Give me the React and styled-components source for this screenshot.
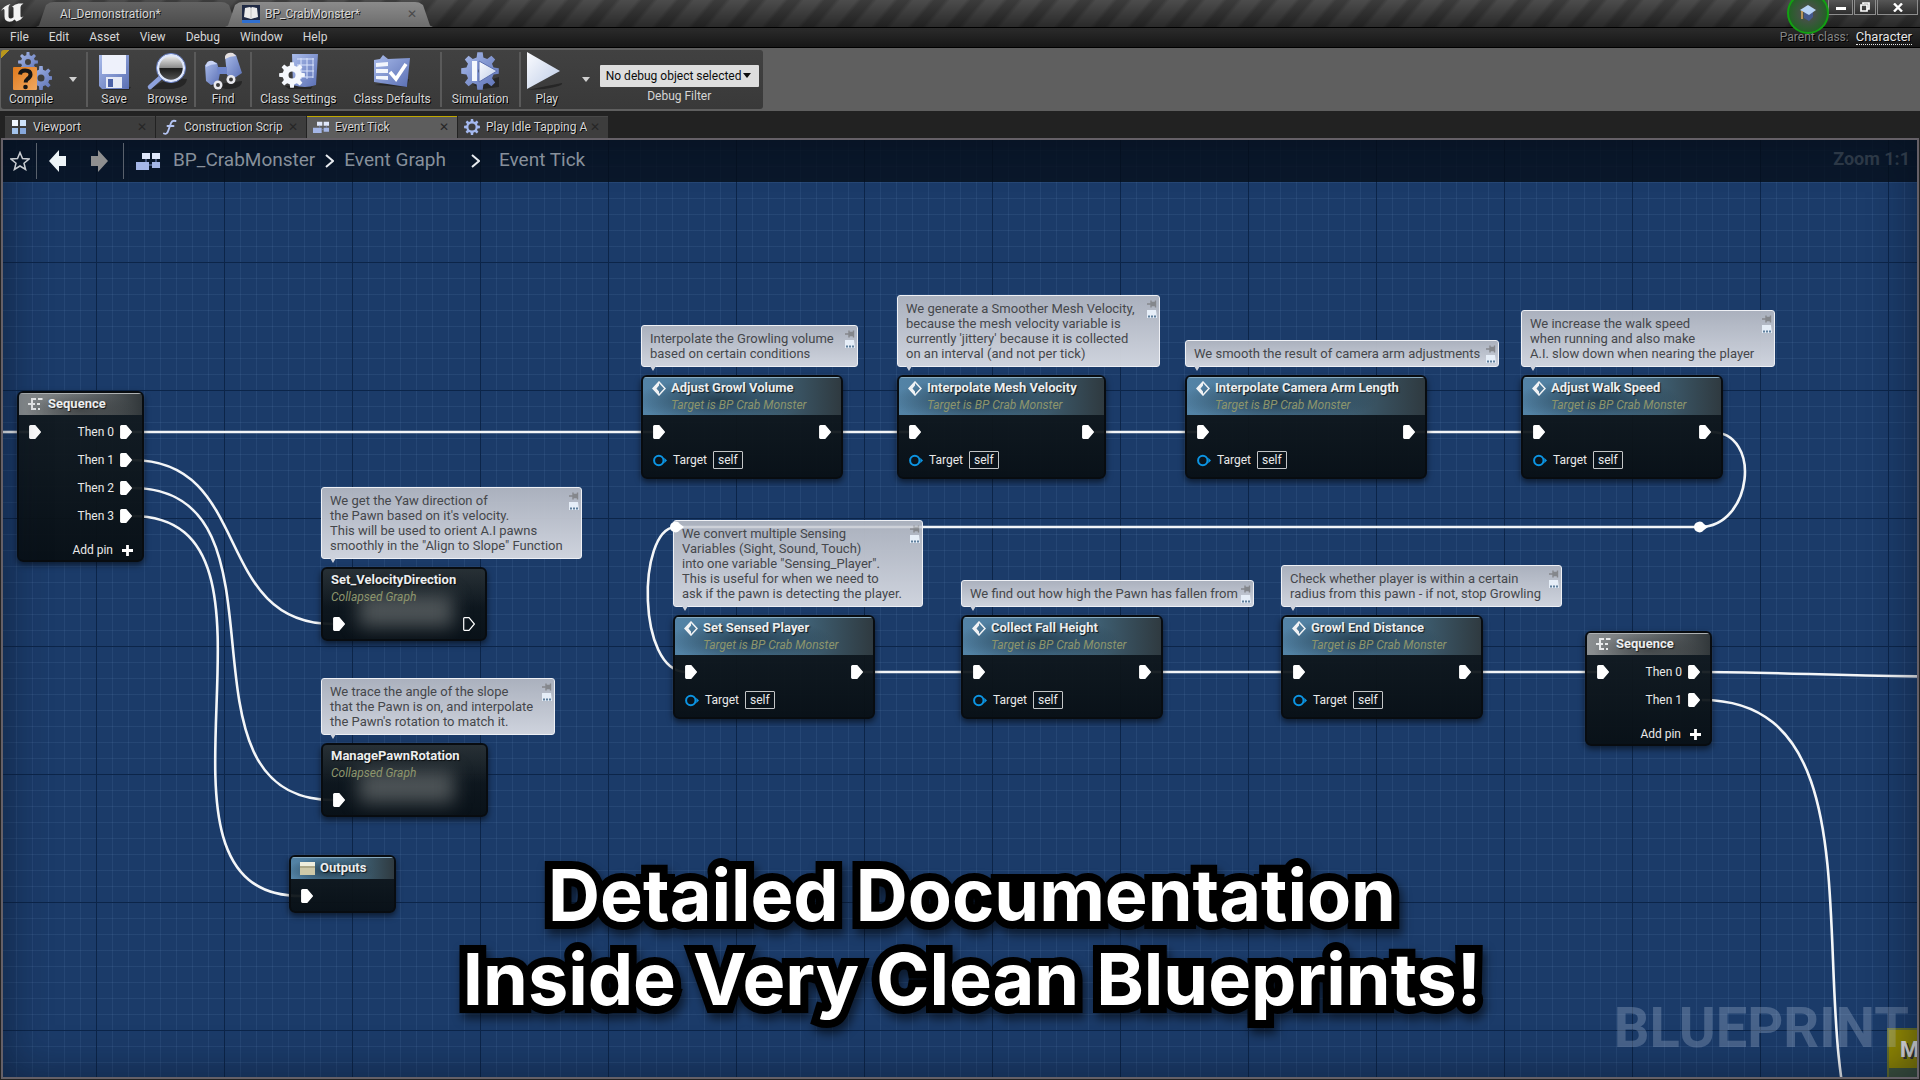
import React from "react";
import styled, { createGlobalStyle, css } from "styled-components";

const GlobalStyle = createGlobalStyle`
  *, *::before, *::after { box-sizing: border-box; }
  html, body { margin: 0; background: #222; }
  body, button, select {
    font-family: Roboto, "Liberation Sans", sans-serif;
    font-size: 12px;
    color: #d6d6d6;
  }
  button { margin: 0; padding: 0; border: 0; background: none; cursor: pointer; }
`;

/* ---------- window frame ---------- */

const Window = styled.div`
  display: flex;
  flex-direction: column;
  height: 100vh;
  overflow: hidden;
  background: #222;
`;

const TitleBar = styled.header`
  display: flex;
  align-items: flex-end;
  height: 27px;
  flex: none;
  background:
    linear-gradient(180deg, rgba(0, 0, 0, 0) 0%, rgba(0, 0, 0, 0.45) 100%),
    repeating-linear-gradient(130deg, #4c4c4c 0 12px, #3c3c3c 16px 24px, #4c4c4c 28px);
`;

const Logo = styled.div`
  width: 44px;
  height: 27px;
  padding: 3px 0 0 1px;
`;

const DocTab = styled.button`
  display: flex;
  align-items: center;
  gap: 5px;
  width: ${(p) => p.$width}px;
  height: 25px;
  margin-right: -14px;
  padding: 0 16px 2px ${(p) => p.$indent}px;
  text-shadow: 1px 1px 0 #111;
  background: ${(p) =>
    p.$active
      ? "linear-gradient(180deg, #8b8b8b, #6c6c6c)"
      : "linear-gradient(180deg, #636363, #4b4b4b)"};
  clip-path: polygon(0 100%, 3px 94%, 10px 12%, 14px 2%, 18px 0, calc(100% - 18px) 0, calc(100% - 14px) 2%, calc(100% - 10px) 12%, calc(100% - 3px) 94%, 100% 100%);
`;

const DocTabs = styled.nav`
  display: flex;
  flex: 1;
  margin-left: -8px;
`;

const Cross = styled.span`
  margin-left: auto;
  line-height: 8px;
  color: ${(p) => (p.$dim ? "#262626" : "#4a4a4a")};
  text-shadow: none;
`;

const SystemButtons = styled.div`
  position: relative;
  display: flex;
  align-self: flex-start;
  gap: 1px;
  margin-right: 2px;
`;

const SystemButton = styled.button`
  display: grid;
  place-items: center;
  width: ${(p) => p.$width}px;
  height: 15px;
  background: linear-gradient(180deg, #565656, #2e2e2e);
  border: 1px solid #8d8d8d;
  border-top: 0;
`;

const Tutorial = styled.button`
  position: absolute;
  right: 89px;
  top: -8px;
  width: 42px;
  height: 42px;
  display: grid;
  place-items: center;
  border-radius: 50%;
  border: 2px solid #12a012;
  background: radial-gradient(circle, #4a4f4b 20%, #0f6a12 100%);
  z-index: 2;
`;

const MenuBar = styled.nav`
  display: flex;
  align-items: center;
  gap: 20px;
  flex: none;
  height: 21px;
  padding: 0 8px 2px 10px;
  border-top: 1px solid #000;
  border-bottom: 1px solid #000;
  background: linear-gradient(180deg, #2b2b2b, #161616);
  text-shadow: 1px 1px 0 #000;
`;

const MenuItem = styled.button`
  line-height: 18px;
`;

const ParentClass = styled.div`
  display: flex;
  align-items: baseline;
  gap: 7px;
  margin-left: auto;
  color: #858585;
`;

const ClassLink = styled.a`
  font-size: 13px;
  line-height: 15px;
  color: #e6e6e6;
  text-decoration: none;
  border-bottom: 1px dotted #e6e6e6;
`;

/* ---------- toolbar ---------- */

const ToolStrip = styled.div`
  flex: none;
  display: flex;
  height: 63px;
  padding: 2px 2px 2px 1px;
  background: #5f5f5f;
`;

const Tools = styled.div`
  display: flex;
  align-items: stretch;
  padding: 0 4px 0 2px;
  background:
    linear-gradient(135deg, #b8961c 0 6px, transparent 6px),
    linear-gradient(180deg, #414141, #393939);
  border-radius: 3px;
`;

const ToolButton = styled.button`
  display: flex;
  flex-direction: column;
  align-items: center;
  justify-content: flex-start;
  padding: 1px ${(p) => p.$pad}px 0;
  line-height: 16px;
  white-space: nowrap;
  text-shadow: 1px 1px 0 #000;
  svg { display: block; }
`;

const Divider = styled.span`
  width: 2px;
  margin: 2px 0;
  background: #5a5a5a;
`;

const Caret = styled.button`
  display: grid;
  place-items: center;
  width: 27px;
`;

const Filter = styled.label`
  display: flex;
  flex-direction: column;
  align-items: center;
  justify-content: center;
  gap: 1px;
  padding-top: 9px;
  line-height: 16px;
`;

const SelectBox = styled.span`
  display: grid;
  align-items: center;
  width: 159px;
  height: 22px;
  background: #dedede;
  border-radius: 1px;
  svg { grid-area: 1 / 1; justify-self: end; margin-right: 8px; }
`;

const Select = styled.select`
  grid-area: 1 / 1;
  appearance: none;
  width: 100%;
  height: 22px;
  padding: 0 0 0 6px;
  border: 0;
  background: none;
  color: #0c0c0c;
`;

const Tabs = styled.nav`
  flex: none;
  display: flex;
  gap: 1px;
  height: 27px;
  padding: 5px 5px 0;
`;

const Tab = styled.button`
  display: flex;
  align-items: center;
  width: 150px;
  padding: 0 8px 2px 6px;
  text-shadow: 1px 1px 0 #000;
  white-space: nowrap;
  border-top: 1px solid ${(p) => (p.$active ? "#c0a800" : "#484848")};
  background: ${(p) => (p.$active ? "#5d5d5d" : "#3d3d3d")};
  svg { flex: none; margin-right: 6px; }
`;

const TabLabel = styled.span`
  overflow: hidden;
  max-width: 104px;
`;

/* ---------- graph ---------- */

const Canvas = styled.main`
  position: relative;
  flex: 1;
  overflow: hidden;
  margin: 0 1px 1px;
  border: 2px solid #656067;
  background-color: #1b3b69;
  background-image:
    linear-gradient(#0c2549 1px, transparent 1px),
    linear-gradient(90deg, #0c2549 1px, transparent 1px),
    linear-gradient(rgba(130, 170, 220, 0.1) 1px, transparent 1px),
    linear-gradient(90deg, rgba(130, 170, 220, 0.1) 1px, transparent 1px);
  background-size: 128px 128px, 128px 128px, 16px 16px, 16px 16px;
  background-position: 93px 122px, 93px 122px, 13px 10px, 13px 10px;
  &::after {
    content: "";
    position: absolute;
    inset: 0;
    pointer-events: none;
    box-shadow: inset 0 0 44px rgba(8, 16, 32, 0.55);
  }
`;

const Crumbs = styled.div`
  position: relative;
  z-index: 2;
  display: flex;
  align-items: center;
  height: 42px;
  padding: 0 7px;
  background: rgba(4, 12, 22, 0.76);
  svg { flex: none; }
`;

const CrumbRule = styled.span`
  width: 1px;
  height: 36px;
  margin: 0 12px 0 6px;
  background: #59616c;
`;

const NavButton = styled.button`
  display: grid;
  margin-right: ${(p) => p.$after}px;
`;

const Crumb = styled.button`
  margin: 0 ${(p) => p.$after}px 0 ${(p) => p.$before}px;
  padding-bottom: 2px;
  font-size: 19px;
  line-height: 24px;
  color: #87909b;
`;

const Zoom = styled.span`
  margin-left: auto;
  padding-bottom: 6px;
  font-size: 18px;
  font-weight: 700;
  color: #2c3846;
`;

/* Graph space is panned so that its origin sits at the window's corner. */
const World = styled.div`
  position: absolute;
  left: -3px;
  top: -140px;
  width: 1920px;
  height: 1080px;
`;

const Wires = styled.svg`
  position: absolute;
  left: 0;
  top: 0;
  fill: none;
  stroke: #f4f6f8;
  stroke-width: 2.6;
`;

const NodeSlot = styled.div`
  position: absolute;
  left: ${(p) => p.$x}px;
  top: ${(p) => p.$y}px;
  width: ${(p) => p.$w}px;
`;

const Note = styled.div`
  position: absolute;
  left: 0;
  bottom: calc(100% + 8px);
  width: ${(p) => p.$w}px;
  padding: 5px 8px;
  border: 1px solid #eef0f5;
  border-radius: 3px;
  background: linear-gradient(180deg, rgba(178, 183, 194, 0.95), rgba(212, 216, 225, 0.97));
  font-size: 13px;
  line-height: 15px;
  white-space: pre;
  color: #45474b;
  &::after {
    content: "";
    position: absolute;
    left: 8px;
    top: 100%;
    border: 3px solid transparent;
    border-top: 5px solid #cfd3dc;
  }
`;

const NoteTools = styled.div`
  position: absolute;
  right: 2px;
  top: 3px;
  svg { display: block; }
`;

const NodeBox = styled.section`
  overflow: hidden;
  border: 2px solid #080c10;
  border-radius: 6px;
  background: linear-gradient(180deg, rgba(19, 27, 32, 0.93), rgba(8, 15, 20, 0.95));
  box-shadow: 0 3px 6px rgba(0, 0, 0, 0.55);
`;

const headers = {
  call: css`
    background:
      radial-gradient(ellipse 42% 60% at 38% 62%, rgba(32, 56, 72, 0.9), rgba(32, 56, 72, 0) 100%),
      linear-gradient(90deg, #5383a6 0%, #4c7896 45%, #3c5a6c 72%, #2f3a40 100%);
    box-shadow: inset 0 1px 0 #86a9c0;
  `,
  flow: css`
    background:
      radial-gradient(ellipse 45% 80% at 50% 80%, rgba(50, 54, 56, 0.7), rgba(50, 54, 56, 0) 100%),
      linear-gradient(90deg, #8b8f91 0%, #6d7274 50%, #32383b 100%);
    box-shadow: inset 0 1px 0 #aeb2b4;
  `,
  plain: css`
    padding-left: 8px;
    background: linear-gradient(180deg, rgba(48, 56, 60, 0.7), rgba(48, 56, 60, 0));
  `,
};

const NodeHeader = styled.header`
  display: flex;
  align-items: flex-start;
  gap: 5px;
  height: ${(p) => (p.$tall ? 38 : 22)}px;
  padding: 2px 9px 0;
  ${(p) => headers[p.$kind]}
  svg { flex: none; margin-top: 2px; }
`;

const NodeTitle = styled.h2`
  position: relative;
  z-index: 1;
  margin: 0;
  font-size: 13px;
  line-height: 17px;
  font-weight: 700;
  white-space: nowrap;
  color: #eceeef;
  text-shadow: 1px 1px 1px rgba(0, 0, 0, 0.7);
`;

const NodeSub = styled.p`
  position: relative;
  z-index: 1;
  margin: 0;
  line-height: 19px;
  font-style: italic;
  white-space: nowrap;
  color: #8d956c;
`;

const NodeBody = styled.div`
  position: relative;
  padding: 3px 10px ${(p) => p.$foot}px;
  ${(p) =>
    p.$collapsed &&
    css`
      &::before {
        content: "";
        position: absolute;
        left: 36px;
        right: 32px;
        top: -12px;
        bottom: 12px;
        background: rgba(120, 125, 125, 0.6);
        filter: blur(9px);
      }
    `}
`;

const PinRow = styled.div`
  position: relative;
  display: flex;
  align-items: center;
  gap: 6px;
  height: 28px;
  color: #e9e9e9;
  svg { flex: none; display: block; }
`;

const Push = styled.span`
  margin-left: auto;
`;

const Self = styled.span`
  height: 18px;
  padding: 0 4px;
  line-height: 16px;
  border: 1px solid #c4c6c7;
  border-radius: 1px;
`;

const AddPin = styled.button`
  display: flex;
  align-items: center;
  justify-content: flex-end;
  gap: 9px;
  width: 100%;
  height: 20px;
  margin-top: 10px;
  padding-right: 9px;
  color: #e9e9e9;
`;

const Watermark = styled.div`
  position: absolute;
  right: 8px;
  bottom: 11px;
  font-size: 56px;
  line-height: 75px;
  font-weight: 700;
  color: rgba(190, 205, 225, 0.28);
`;

const Macro = styled.div`
  position: absolute;
  left: 1887px;
  top: 1028px;
  width: 120px;
  height: 120px;
  border: 2px solid #66702c;
  background: #40563f;
`;

const MacroTitle = styled.div`
  height: 38px;
  padding: 0 11px;
  background: #928800;
  font-size: 22px;
  line-height: 40px;
  font-weight: 700;
  color: #e6e6e6;
  text-shadow: 2px 2px 0 #333;
`;

const Banner = styled.p`
  position: absolute;
  left: 0;
  right: 0;
  bottom: 56px;
  margin: 0;
  padding-left: 24px;
  text-align: center;
  font-family: Inter, "Open Sans", sans-serif;
  font-size: 72px;
  line-height: 84px;
  font-weight: 700;
  color: #fff;
  -webkit-text-stroke: 16px #000;
  paint-order: stroke fill;
  stroke-linejoin: round;
  filter: drop-shadow(3px 6px 5px rgba(0, 0, 0, 0.55));
  z-index: 3;
`;

/* ---------- drawings ---------- */

const gear = (cx, cy, outer, inner, hole, teeth) => {
  const pts = [];
  for (let i = 0; i < teeth; i++) {
    const a = (i / teeth) * Math.PI * 2 - Math.PI / 2;
    const s = Math.PI / teeth;
    [[-0.62, inner], [-0.36, outer], [0.36, outer], [0.62, inner]].forEach(([k, r]) =>
      pts.push(`${(cx + Math.cos(a + k * s) * r).toFixed(2)} ${(cy + Math.sin(a + k * s) * r).toFixed(2)}`)
    );
  }
  return `M${pts.join("L")}Z M${cx - hole} ${cy}a${hole} ${hole} 0 1 0 ${hole * 2} 0a${hole} ${hole} 0 1 0 ${-hole * 2} 0Z`;
};

const HiddenSvg = styled.svg`
  position: absolute;
`;

const Defs = () => (
  <HiddenSvg width="0" height="0" aria-hidden="true">
    <defs>
      <linearGradient id="blue" x1="0" y1="0" x2="1" y2="1">
        <stop offset="0" stopColor="#a9bbea" />
        <stop offset="1" stopColor="#5a6fb4" />
      </linearGradient>
      <linearGradient id="pale" x1="0" y1="0" x2="1" y2="1">
        <stop offset="0" stopColor="#fbfcff" />
        <stop offset="1" stopColor="#bccbe6" />
      </linearGradient>
      <linearGradient id="orange" x1="0" y1="0" x2="1" y2="1">
        <stop offset="0" stopColor="#e07a1c" />
        <stop offset="1" stopColor="#f0a860" />
      </linearGradient>
      <linearGradient id="glass" x1="0" y1="0" x2="0" y2="1">
        <stop offset="0" stopColor="#f4f4f4" />
        <stop offset="0.48" stopColor="#8e8e8e" />
        <stop offset="0.52" stopColor="#1c1c1c" />
        <stop offset="1" stopColor="#585858" />
      </linearGradient>
    </defs>
  </HiddenSvg>
);

const Shade = ({ d }) => <path d={d} fill="#1a1a1a" opacity="0.65" />;

const CompileIcon = () => (
  <svg width="42" height="40" viewBox="0 0 42 40">
    <path d={gear(31, 27, 12, 8.5, 3.5, 8)} fill="url(#blue)" fillRule="evenodd" />
    <path d={gear(18, 11, 10, 7, 3, 8)} fill="url(#blue)" fillRule="evenodd" />
    <rect x="3" y="16" width="24" height="23" rx="1" fill="url(#orange)" />
    <path d="M10 23.500Q10.500 19.500 15.200 19.500Q20.500 19.500 20.500 23.500Q20.500 26 17.500 28Q15.700 29.300 15.700 31.500" fill="none" stroke="#161616" strokeWidth="4" />
    <circle cx="15.500" cy="36" r="2.300" fill="#161616" />
  </svg>
);

const SaveIcon = () => (
  <svg width="42" height="40" viewBox="0 0 42 40">
    <Shade d="M8 34L38 36L36 39H12Z" />
    <path d="M6 4H36V38H9L6 35Z" fill="url(#blue)" />
    <path d="M9 4H33V23H9Z" fill="#eef1fb" />
    <path d="M13 26H29V37H13Z" fill="#e6eaf6" />
    <path d="M15 28H20V36H15Z" fill="#4c62a8" />
  </svg>
);

const BrowseIcon = () => (
  <svg width="42" height="40" viewBox="0 0 42 40">
    <Shade d="M14 32Q28 26 41 28Q40 37 24 38H4Z" />
    <path d="M14 27L4 36" stroke="#8ea2dd" strokeWidth="4.500" strokeLinecap="round" />
    <circle cx="25" cy="17" r="13" fill="url(#glass)" stroke="#dfe7fb" strokeWidth="2.500" />
    <circle cx="25" cy="17" r="14.600" fill="none" stroke="#6d84c8" strokeWidth="1" />
  </svg>
);

const FindIcon = () => (
  <svg width="42" height="40" viewBox="0 0 42 40">
    <Shade d="M8 34L40 30Q40 38 24 38Z" />
    <path d="M3 14Q9 9 15 12L18 22L16 32L9 34L4 30Z" fill="url(#blue)" />
    <path d="M23 5Q29 1 34 4L40 22L31 28L25 24Z" fill="url(#blue)" />
    <path d="M15 16H25V23H16Z" fill="#6f86cb" />
    <path d="M4 14Q5 9 11 10L15 13Q9 13 4 16Z" fill="#c9d4f5" />
    <path d="M23 6Q24 1 31 2L34 5Q28 5 23 8Z" fill="#e6e0e0" />
    <circle cx="16" cy="34" r="4.500" fill="#e9e9ee" />
    <circle cx="16" cy="34" r="2" fill="#3a3a3a" />
    <circle cx="29" cy="28.500" r="4.500" fill="#e9e9ee" />
    <circle cx="29" cy="28.500" r="2" fill="#3a3a3a" />
  </svg>
);

const SettingsIcon = () => (
  <svg width="42" height="40" viewBox="0 0 42 40">
    <Shade d="M8 35L36 34L34 38H12Z" />
    <path d="M15 3H41L39 34Q28 38 16 34Z" fill="url(#blue)" />
    <path d="M20 8H37M20 14H37M20 20H37M20 26H36M24 7V28M30 7V28M36 7V27" stroke="#d8e2fb" strokeWidth="1" />
    <path d={gear(15, 24, 13, 9.5, 3.5, 8)} fill="#f5f8fd" fillRule="evenodd" />
  </svg>
);

const DefaultsIcon = () => (
  <svg width="42" height="40" viewBox="0 0 42 40">
    <Shade d="M4 34L36 36L38 28Z" />
    <path d="M3 9L9 8L12 4L17 8L39 7L36 36L3 31Z" fill="url(#blue)" />
    <path d="M5 12L17 11V15L5 16ZM5 18L17 18V22L5 22ZM5 25L17 25V29L5 28Z" fill="#f2f5fc" />
    <path d="M19 21L25 28L35 13" fill="none" stroke="#fff" strokeWidth="3.500" />
  </svg>
);

const SimulateIcon = () => (
  <svg width="42" height="40" viewBox="0 0 42 40">
    <Shade d="M14 34L40 26L40 36L24 38Z" />
    <path d={gear(21, 20, 19, 14, 2, 8)} fill="url(#blue)" fillRule="evenodd" />
    <path d="M13 10H18V30H13Z" fill="#f4f7fd" />
    <path d="M20 10L38 20L20 31Z" fill="url(#pale)" stroke="#5b6fae" strokeWidth="1" />
  </svg>
);

const PlayIcon = () => (
  <svg width="42" height="40" viewBox="0 0 42 40">
    <Shade d="M1 39L36 32Q38 35 18 38Z" />
    <path d="M1 1L34 20L1 38Z" fill="url(#pale)" />
  </svg>
);

const CaretIcon = ({ color = "#d0d0d0" }) => (
  <svg width="8" height="5" viewBox="0 0 8 5"><path d="M0 0H8L4 5Z" fill={color} /></svg>
);

const UnrealLogo = () => (
  <svg width="24" height="20" viewBox="0 0 24 20" aria-label="Unreal">
    <path d="M0 8Q3 2.500 9.500 1Q7.500 2.500 7.500 4.500V13.500Q7.500 15.500 9.500 15.500Q11 15.500 12.500 14.200V5Q12.500 3.500 10.800 4Q13.500 1 17.500 0.500H22.500Q19.500 2 19.500 4V13Q19.500 14.500 21 14.200L22.500 13Q20.500 17 15.500 18.500L13.500 16.500Q11.500 18.800 8.500 18.800Q3.500 18.500 3.500 13.500V7.500Q3.500 5.800 2.500 6Q1.200 6.400 0 8Z" fill="#f2f2f2" />
  </svg>
);

const BookIcon = () => (
  <svg width="18" height="18" viewBox="0 0 18 18">
    <rect width="18" height="16" fill="#1f2a44" />
    <path d="M2 12L3 3L8 2L9 3L10 2L15 3L16 12L9 14Z" fill="#ececec" />
    <path d="M9 3V13" stroke="#b5b5b5" strokeWidth="0.800" />
    <rect y="15" width="18" height="3" fill="#2f6fd0" />
  </svg>
);

const GridIcon = () => (
  <svg width="16" height="14" viewBox="-1 0 16 14">
    <path d="M0 0H6V6H0Z" fill="#f2f8ff" /><path d="M8 0H14V6H8Z" fill="#cfe3fa" />
    <path d="M0 8H6V14H0Z" fill="#a3c3ec" /><path d="M8 8H14V14H8Z" fill="#86a8dc" />
  </svg>
);

const GraphIcon = ({ size = 16 }) => (
  <svg width={size} height={(size * 3) / 4} viewBox="0 0 24 18">
    <path d="M6 1H14V7H6ZM16 1H24V7H16Z" fill="#dfe7fa" />
    <path d="M0 10H13V18H0ZM16 10H24V16H16Z" fill="#a4b6e6" />
    <path d="M10 7V10M20 7V10M13 13H16" stroke="#7f92cc" strokeWidth="1" />
  </svg>
);

const FunctionIcon = () => (
  <svg width="16" height="16" viewBox="0 0 16 16">
    <path d="M2 14.500Q5 16 6.500 11L9 4Q10.200 0.800 13.500 2M5.500 7H11.500" fill="none" stroke="#b4c4f2" strokeWidth="1.900" strokeLinecap="round" />
  </svg>
);

const GearIcon = () => (
  <svg width="16" height="16" viewBox="0 0 16 16">
    <path d={gear(8, 8, 8, 5.8, 3.6, 8)} fill="#a4b8ee" fillRule="evenodd" />
  </svg>
);

const EventIcon = () => (
  <svg width="14" height="15" viewBox="0 0 14 15">
    <path d="M7 1L13 7.500L7 14L1 7.500Z" fill="none" stroke="#f0f2f4" strokeWidth="1.500" />
    <path d="M7 1L1 7.500L7 14L7 10.500L4.500 7.500L7 4.500Z" fill="#f0f2f4" />
  </svg>
);

const SequenceIcon = () => (
  <svg width="15" height="14" viewBox="0 0 15 14">
    <path d="M0 7H7M4 1V13M4 2H8M4 12H8M10 2H14.500M9 7H12M10 12H12" fill="none" stroke="#e8eaeb" strokeWidth="2" />
  </svg>
);

const BoxIcon = () => (
  <svg width="15" height="15" viewBox="0 0 15 15">
    <path d="M0 1H15V14H0Z" fill="#cfc9a8" /><path d="M0 1H15V5H0Z" fill="#efeedd" />
    <path d="M0 6H15" stroke="#8b8768" />
  </svg>
);

const ExecPin = ({ open }) => (
  <svg width="12" height="14" viewBox="0 0 12 14">
    <path d="M1.500 .7H6L11.400 7L6 13.300H1.500Q.7 13.300 .7 12.500V1.500Q.7 .7 1.500 .7Z" fill={open ? "none" : "#fff"} stroke="#fff" strokeWidth="1.200" />
  </svg>
);

const ObjectPin = () => (
  <svg width="14" height="13" viewBox="0 0 14 13">
    <circle cx="5.800" cy="6.500" r="4.700" fill="none" stroke="#0c94e2" strokeWidth="2" />
    <path d="M11.300 3.800L14 6.500L11.300 9.200Z" fill="#0c94e2" />
  </svg>
);

const PlusIcon = () => (
  <svg width="11" height="11" viewBox="0 0 11 11"><path d="M5.500 0V11M0 5.500H11" stroke="#fff" strokeWidth="2.800" /></svg>
);

const NoteIcons = () => (
  <svg width="10" height="20" viewBox="0 0 10 20">
    <path d="M0 5H4M4 1.500V8.500M4 3.500H8V6.500H4M8.500 1.500V8.500" stroke="#85878c" strokeWidth="1.400" fill="#85878c" />
    <path d="M0 11H9L10 19H0Z" fill="#e6eef8" />
    <path d="M1 17.500H9" stroke="#5f7f9c" strokeWidth="2" strokeDasharray="2 1" />
  </svg>
);

const Chevron = () => (
  <svg width="9" height="14" viewBox="0 0 9 14"><path d="M1 1L8 7L1 13" fill="none" stroke="#e8ecf0" strokeWidth="2" /></svg>
);

/* ---------- data ---------- */

const menus = ["File", "Edit", "Asset", "View", "Debug", "Window", "Help"];

const calls = [
  { x: 641, y: 375, w: 202, title: "Adjust Growl Volume", noteW: 217,
    note: "Interpolate the Growling volume\nbased on certain conditions" },
  { x: 897, y: 375, w: 209, title: "Interpolate Mesh Velocity", noteW: 263,
    note: "We generate a Smoother Mesh Velocity,\nbecause the mesh velocity variable is\ncurrently 'jittery' because it is collected\non an interval (and not per tick)" },
  { x: 1185, y: 375, w: 242, title: "Interpolate Camera Arm Length", noteW: 314,
    note: "We smooth the result of camera arm adjustments" },
  { x: 1521, y: 375, w: 202, title: "Adjust Walk Speed", noteW: 254,
    note: "We increase the walk speed\nwhen running and also make\nA.I. slow down when nearing the player" },
  { x: 673, y: 615, w: 202, title: "Set Sensed Player", noteW: 250,
    note: "We convert multiple Sensing\nVariables (Sight, Sound, Touch)\ninto one variable \"Sensing_Player\".\nThis is useful for when we need to\nask if the pawn is detecting the player." },
  { x: 961, y: 615, w: 202, title: "Collect Fall Height", noteW: 293,
    note: "We find out how high the Pawn has fallen from" },
  { x: 1281, y: 615, w: 202, title: "Growl End Distance", noteW: 281,
    note: "Check whether player is within a certain\nradius from this pawn - if not, stop Growling" },
];

const collapsed = [
  { x: 321, y: 567, w: 166, title: "Set_VelocityDirection", out: true, noteW: 261,
    note: "We get the Yaw direction of\nthe Pawn based on it's velocity.\nThis will be used to orient A.I pawns\nsmoothly in the \"Align to Slope\" Function" },
  { x: 321, y: 743, w: 167, title: "ManagePawnRotation", out: false, noteW: 234,
    note: "We trace the angle of the slope\nthat the Pawn is on, and interpolate\nthe Pawn's rotation to match it." },
];

const sequences = [
  { x: 17, y: 391, outs: 4 },
  { x: 1585, y: 631, outs: 2 },
];

const wires = [
  "M0 432H30", "M132 432H654",
  "M132 460C254 460 211 624 333 624",
  "M132 488C303 488 162 800 333 800",
  "M132 516C315 516 118 896 301 896",
  "M830 432H910", "M1093 432H1198", "M1414 432H1534",
  "M1711 432C1763 432 1752 527 1700 527", "M1700 527H675",
  "M675 527C637 530 637 672 686 672",
  "M862 672H974", "M1150 672H1294", "M1470 672H1598",
  "M1702 672C1780 672 1860 677 1990 677",
  "M1702 700C1944 700 1722 1220 1964 1220",
];

/* ---------- graph parts ---------- */

const Comment = ({ width, text }) => (
  <Note $w={width}>
    {text}
    <NoteTools><NoteIcons /></NoteTools>
  </Note>
);

const CallNode = ({ x, y, w, title, note, noteW }) => (
  <NodeSlot $x={x} $y={y} $w={w}>
    <Comment width={noteW} text={note} />
    <NodeBox>
      <NodeHeader $kind="call" $tall>
        <EventIcon />
        <div>
          <NodeTitle>{title}</NodeTitle>
          <NodeSub>Target is BP Crab Monster</NodeSub>
        </div>
      </NodeHeader>
      <NodeBody $foot={3}>
        <PinRow><ExecPin /><Push /><ExecPin /></PinRow>
        <PinRow><ObjectPin /><span>Target</span><Self>self</Self></PinRow>
      </NodeBody>
    </NodeBox>
  </NodeSlot>
);

const CollapsedNode = ({ x, y, w, title, note, noteW, out }) => (
  <NodeSlot $x={x} $y={y} $w={w}>
    <Comment width={noteW} text={note} />
    <NodeBox>
      <NodeHeader $kind="plain" $tall>
        <div>
          <NodeTitle>{title}</NodeTitle>
          <NodeSub>Collapsed Graph</NodeSub>
        </div>
      </NodeHeader>
      <NodeBody $foot={1} $collapsed>
        <PinRow><ExecPin /><Push />{out && <ExecPin open />}</PinRow>
      </NodeBody>
    </NodeBox>
  </NodeSlot>
);

const SequenceNode = ({ x, y, outs }) => (
  <NodeSlot $x={x} $y={y} $w={127}>
    <NodeBox>
      <NodeHeader $kind="flow"><SequenceIcon /><NodeTitle>Sequence</NodeTitle></NodeHeader>
      <NodeBody $foot={0}>
        {Array.from({ length: outs }, (_, i) => (
          <PinRow key={i}>{i === 0 && <ExecPin />}<Push>Then {i}</Push><ExecPin /></PinRow>
        ))}
      </NodeBody>
      <AddPin>Add pin<PlusIcon /></AddPin>
    </NodeBox>
  </NodeSlot>
);

export default function App() {
  return (
    <Window>
      <GlobalStyle />
      <Defs />
      <TitleBar>
        <Logo><UnrealLogo /></Logo>
        <DocTabs>
          <DocTab $width={203} $indent={24}>AI_Demonstration*</DocTab>
          <DocTab $width={208} $indent={17} $active><BookIcon />BP_CrabMonster*<Cross>✕</Cross></DocTab>
        </DocTabs>
        <SystemButtons>
          <Tutorial aria-label="Tutorials">
            <svg width="16" height="16" viewBox="0 0 16 16">
              <path d="M4 8V13L9 16L13 12V7Z" fill="#44598c" />
              <path d="M0 5L8 0L16 5L9 10Z" fill="#b7d3f5" />
              <path d="M2 6V14" stroke="#d9a860" strokeWidth="1.500" />
            </svg>
          </Tutorial>
          <SystemButton $width={25} aria-label="Minimize"><svg width="10" height="8"><path d="M0 4H10V7H0Z" fill="#fff" /></svg></SystemButton>
          <SystemButton $width={22} aria-label="Restore"><svg width="10" height="10" viewBox="0 0 10 10"><path d="M3 2V1H9V7H7M1 3H7V9H1Z" fill="none" stroke="#fff" strokeWidth="1.700" /></svg></SystemButton>
          <SystemButton $width={41} aria-label="Close"><svg width="10" height="9" viewBox="0 0 10 9"><path d="M1 0.500L9 8.500M9 0.500L1 8.500" stroke="#fff" strokeWidth="2.400" /></svg></SystemButton>
        </SystemButtons>
      </TitleBar>

      <MenuBar>
        {menus.map((m) => <MenuItem key={m}>{m}</MenuItem>)}
        <ParentClass>Parent class: <ClassLink href="#">Character</ClassLink></ParentClass>
      </MenuBar>

      <ToolStrip>
        <Tools>
          <ToolButton $pad={6}><CompileIcon />Compile</ToolButton>
          <Caret aria-label="Compile options"><CaretIcon /></Caret>
          <Divider />
          <ToolButton $pad={5}><SaveIcon />Save</ToolButton>
          <ToolButton $pad={6}><BrowseIcon />Browse</ToolButton>
          <Divider />
          <ToolButton $pad={6}><FindIcon />Find</ToolButton>
          <Divider />
          <ToolButton $pad={8}><SettingsIcon />Class Settings</ToolButton>
          <ToolButton $pad={9}><DefaultsIcon />Class Defaults</ToolButton>
          <Divider />
          <ToolButton $pad={10}><SimulateIcon />Simulation</ToolButton>
          <Divider />
          <ToolButton $pad={5}><PlayIcon />Play</ToolButton>
          <Caret aria-label="Play options"><CaretIcon /></Caret>
          <Filter>
            <SelectBox>
              <CaretIcon color="#0c0c0c" />
              <Select defaultValue="none"><option value="none">No debug object selected</option></Select>
            </SelectBox>
            Debug Filter
          </Filter>
        </Tools>
      </ToolStrip>

      <Tabs>
        <Tab><GridIcon /><TabLabel>Viewport</TabLabel><Cross $dim>✕</Cross></Tab>
        <Tab><FunctionIcon /><TabLabel>Construction Scrip</TabLabel><Cross $dim>✕</Cross></Tab>
        <Tab $active><GraphIcon /><TabLabel>Event Tick</TabLabel><Cross $dim>✕</Cross></Tab>
        <Tab><GearIcon /><TabLabel>Play Idle Tapping A</TabLabel><Cross $dim>✕</Cross></Tab>
      </Tabs>

      <Canvas>
        <World>
          <Macro><MacroTitle>M</MacroTitle></Macro>
        </World>
        <Watermark>BLUEPRINT</Watermark>
        <World>
          <Wires width="1920" height="1080" viewBox="0 0 1920 1080">
            {wires.map((d) => <path key={d} d={d} />)}
          </Wires>
          {sequences.map((n) => <SequenceNode key={n.x} {...n} />)}
          {calls.map((n) => <CallNode key={n.title} {...n} />)}
          {collapsed.map((n) => <CollapsedNode key={n.title} {...n} />)}
          <NodeSlot $x={289} $y={855} $w={107}>
            <NodeBox>
              <NodeHeader $kind="call"><BoxIcon /><NodeTitle>Outputs</NodeTitle></NodeHeader>
              <NodeBody $foot={1}><PinRow><ExecPin /></PinRow></NodeBody>
            </NodeBox>
          </NodeSlot>
          <Wires width="1920" height="1080" viewBox="0 0 1920 1080">
            <path d="M676 527H922" opacity="0.35" />
            <g fill="#fff" stroke="none">
              <path d="M670 527a5.500 5.500 0 0 1 10 -3l4 3l-4 3a5.500 5.500 0 0 1 -10 -3Z" />
              <path d="M1694 527a5.500 5.500 0 0 1 10 -3l4 3l-4 3a5.500 5.500 0 0 1 -10 -3Z" />
            </g>
          </Wires>
        </World>
        <Crumbs>
          <NavButton $after={0} aria-label="Favourite">
            <svg width="20" height="20" viewBox="0 0 20 20"><path d="M10 1.500L12.500 7.500L19 8L14 12.200L15.600 18.500L10 15L4.400 18.500L6 12.200L1 8L7.500 7.500Z" fill="none" stroke="#c9cdd2" strokeWidth="1.500" /></svg>
          </NavButton>
          <CrumbRule />
          <NavButton $after={25} aria-label="Back">
            <svg width="17" height="22" viewBox="0 0 17 22"><path d="M0 11L10 0V6H17V16H10V22Z" fill="#eef5f8" /></svg>
          </NavButton>
          <NavButton $after={9} aria-label="Forward">
            <svg width="17" height="22" viewBox="0 0 17 22"><path d="M17 11L7 0V6H0V16H7V22Z" fill="#8f8f8f" /></svg>
          </NavButton>
          <CrumbRule />
          <GraphIcon size={24} />
          <Crumb $before={13} $after={10}>BP_CrabMonster</Crumb>
          <Chevron />
          <Crumb $before={10} $after={25}>Event Graph</Crumb>
          <Chevron />
          <Crumb $before={19} $after={18}>Event Tick</Crumb>
          <Zoom>Zoom 1:1</Zoom>
        </Crumbs>
        <Banner>Detailed Documentation<br />Inside Very Clean Blueprints!</Banner>
      </Canvas>
    </Window>
  );
}
